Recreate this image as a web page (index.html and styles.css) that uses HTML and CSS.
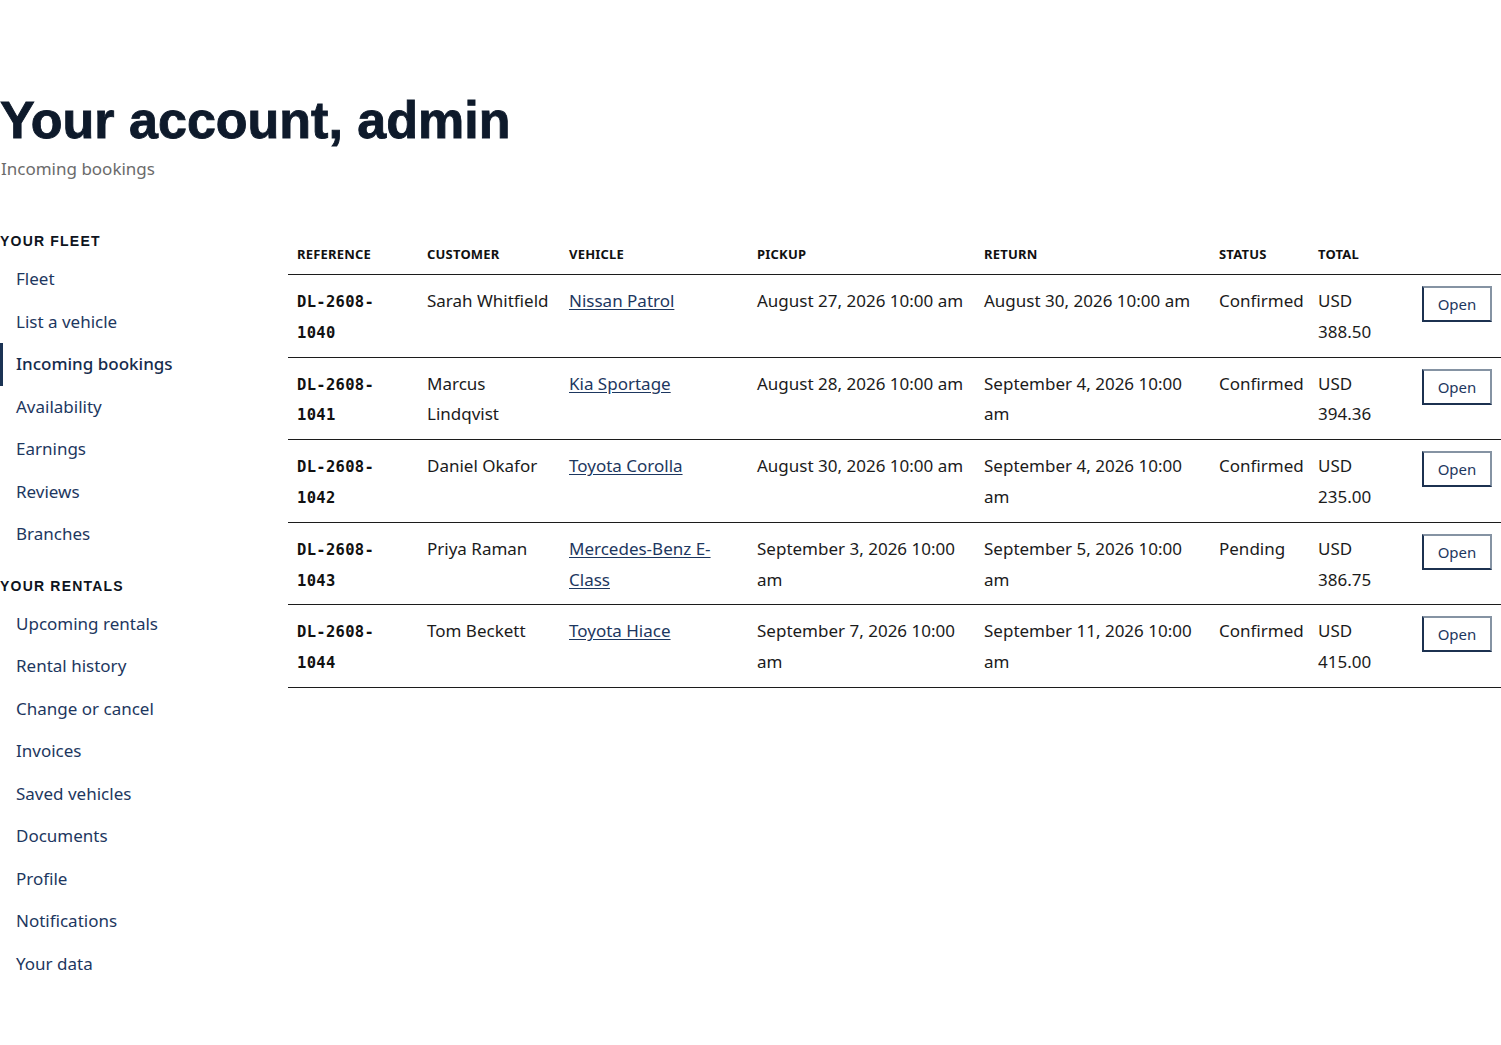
FILE: index.html
```html
<!DOCTYPE html>
<html lang="en">
<head>
    <meta charset="UTF-8">
    <meta name="viewport" content="width=device-width, initial-scale=1.0">
    <title>Your account - Incoming bookings</title>
    <link rel="stylesheet" href="styles.css">
</head>
<body>
    <div class="page">
        <header class="page-head">
            <h1>Your account, admin</h1>
            <p class="lead">Incoming bookings</p>
        </header>

        <div class="layout">
            <nav class="side-nav">
                <h2>Your fleet</h2>
                <ul>
                    <li><a href="#">Fleet</a></li>
                    <li><a href="#">List a vehicle</a></li>
                    <li class="active"><a href="#">Incoming bookings</a></li>
                    <li><a href="#">Availability</a></li>
                    <li><a href="#">Earnings</a></li>
                    <li><a href="#">Reviews</a></li>
                    <li><a href="#">Branches</a></li>
                </ul>

                <h2>Your rentals</h2>
                <ul>
                    <li><a href="#">Upcoming rentals</a></li>
                    <li><a href="#">Rental history</a></li>
                    <li><a href="#">Change or cancel</a></li>
                    <li><a href="#">Invoices</a></li>
                    <li><a href="#">Saved vehicles</a></li>
                    <li><a href="#">Documents</a></li>
                    <li><a href="#">Profile</a></li>
                    <li><a href="#">Notifications</a></li>
                    <li><a href="#">Your data</a></li>
                </ul>
            </nav>

            <main>
                <table class="bookings">
                    <colgroup>
                        <col class="c-ref">
                        <col class="c-customer">
                        <col class="c-vehicle">
                        <col class="c-pickup">
                        <col class="c-return">
                        <col class="c-status">
                        <col class="c-total">
                        <col class="c-action">
                    </colgroup>
                    <thead>
                        <tr>
                            <th>Reference</th>
                            <th>Customer</th>
                            <th>Vehicle</th>
                            <th>Pickup</th>
                            <th>Return</th>
                            <th>Status</th>
                            <th>Total</th>
                            <th></th>
                        </tr>
                    </thead>
                    <tbody>
                        <tr>
                            <td><code>DL-2608-1040</code></td>
                            <td>Sarah Whitfield</td>
                            <td><a href="#">Nissan Patrol</a></td>
                            <td>August 27, 2026 10:00 am</td>
                            <td>August 30, 2026 10:00 am</td>
                            <td>Confirmed</td>
                            <td>USD 388.50</td>
                            <td><button type="button">Open</button></td>
                        </tr>
                        <tr>
                            <td><code>DL-2608-1041</code></td>
                            <td>Marcus Lindqvist</td>
                            <td><a href="#">Kia Sportage</a></td>
                            <td>August 28, 2026 10:00 am</td>
                            <td>September 4, 2026 10:00 am</td>
                            <td>Confirmed</td>
                            <td>USD 394.36</td>
                            <td><button type="button">Open</button></td>
                        </tr>
                        <tr>
                            <td><code>DL-2608-1042</code></td>
                            <td>Daniel Okafor</td>
                            <td><a href="#">Toyota Corolla</a></td>
                            <td>August 30, 2026 10:00 am</td>
                            <td>September 4, 2026 10:00 am</td>
                            <td>Confirmed</td>
                            <td>USD 235.00</td>
                            <td><button type="button">Open</button></td>
                        </tr>
                        <tr>
                            <td><code>DL-2608-1043</code></td>
                            <td>Priya Raman</td>
                            <td><a href="#">Mercedes-Benz E-Class</a></td>
                            <td>September 3, 2026 10:00 am</td>
                            <td>September 5, 2026 10:00 am</td>
                            <td>Pending</td>
                            <td>USD 386.75</td>
                            <td><button type="button">Open</button></td>
                        </tr>
                        <tr>
                            <td><code>DL-2608-1044</code></td>
                            <td>Tom Beckett</td>
                            <td><a href="#">Toyota Hiace</a></td>
                            <td>September 7, 2026 10:00 am</td>
                            <td>September 11, 2026 10:00 am</td>
                            <td>Confirmed</td>
                            <td>USD 415.00</td>
                            <td><button type="button">Open</button></td>
                        </tr>
                    </tbody>
                </table>
            </main>
        </div>
    </div>
</body>
</html>
```

FILE: styles.css
```css
body {
    margin: 0;
    background-color: #fff;
    color: #1b1b1b;
    font-family: "Noto Sans", "Open Sans", sans-serif;
    font-size: 17px;
}
a {
    color: #1d3760;
}
.page {
    padding-top: 91px;
}
.page-head h1 {
    margin: 0;
    font-family: "Liberation Sans", Arial, sans-serif;
    font-size: 52px;
    font-weight: bold;
    line-height: 58px;
    color: #0e1a2b;
    -webkit-text-stroke: 0.9px #0e1a2b;
}
.lead {
    margin: 7px 0 0 1px;
    line-height: 26px;
    color: #6b6b6b;
}
.layout {
    display: grid;
    grid-template-columns: 288px 1fr;
    margin-top: 49px;
}

/* sidebar */
.side-nav h2 {
    margin: 0;
    font-family: "Liberation Sans", Arial, sans-serif;
    font-size: 14px;
    line-height: 20px;
    font-weight: bold;
    letter-spacing: 1.2px;
    text-transform: uppercase;
    color: #0e1420;
}
.side-nav h2 + ul {
    margin-top: 7px;
}
.side-nav ul + h2 {
    margin-top: 20px;
}
.side-nav ul {
    list-style: none;
    margin: 0;
    padding: 0;
}
.side-nav li {
    border-left: 3px solid transparent;
}
.side-nav li a {
    display: block;
    padding: 8px 13px;
    line-height: 26.5px;
    text-decoration: none;
}
.side-nav li.active {
    border-left-color: #1b3354;
}
.side-nav li.active a {
    font-weight: 500;
    color: #162c4d;
}

/* bookings table */
.bookings {
    width: 100%;
    border-collapse: collapse;
    table-layout: fixed;
}
.c-ref { width: 130px; }
.c-customer { width: 142px; }
.c-vehicle { width: 188px; }
.c-pickup { width: 227px; }
.c-return { width: 235px; }
.c-status { width: 99px; }
.c-total { width: 104px; }
.c-action { width: 88px; }
.bookings th {
    padding: 14px 9px 11px;
    font-size: 13px;
    line-height: 18px;
    font-weight: bold;
    letter-spacing: 0.2px;
    text-transform: uppercase;
    text-align: left;
    color: #111;
    border-bottom: 1px solid #1c1c1c;
}
.bookings td {
    padding: 11px 9px 9px;
    line-height: 30.8px;
    vertical-align: top;
    border-bottom: 1px solid #1c1c1c;
}
.bookings code {
    display: block;
    padding-top: 1px;
    margin-bottom: -1px;
    font-family: "DejaVu Sans Mono", "Liberation Mono", monospace;
    font-size: 15.5px;
    font-weight: bold;
    line-height: 30.8px;
    letter-spacing: 0.3px;
    color: #111;
}
.bookings a {
    text-underline-offset: 2px;
}
button {
    display: block;
    width: 70px;
    height: 36px;
    padding: 0;
    background-color: #fff;
    border: 2px solid;
    border-color: #8593a3 #8593a3 #1c3150 #1c3150;
    border-radius: 0;
    color: #1d3760;
    font-family: "Noto Sans", sans-serif;
    font-size: 15px;
    cursor: pointer;
}
```
